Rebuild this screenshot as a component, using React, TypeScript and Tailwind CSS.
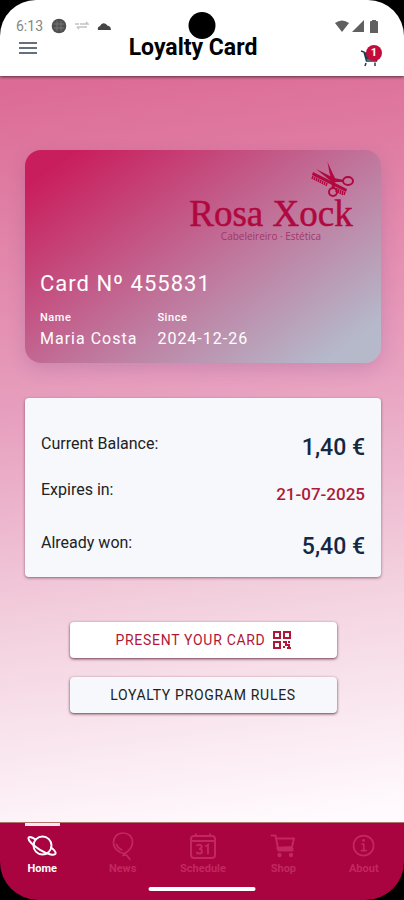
import type { ReactNode } from 'react';
import { IoInformationCircleOutline } from 'react-icons/io5';

const ROBOTO = "font-['Roboto','Liberation_Sans',sans-serif]";

type Tab = { label: string; icon: ReactNode; active?: boolean };

const tabs: Tab[] = [
  { label: 'Home', icon: <PlanetIcon />, active: true },
  { label: 'News', icon: <BalloonIcon /> },
  { label: 'Schedule', icon: <CalendarIcon /> },
  { label: 'Shop', icon: <CartIcon /> },
  { label: 'About', icon: <IoInformationCircleOutline className="size-7" /> }
];

const balance = [
  { label: 'Current Balance:', value: '1,40 €', row: 'h-[46px]', style: 'text-[23px] text-[#142843]' },
  { label: 'Expires in:', value: '21-07-2025', row: 'h-[53px]', style: 'text-[17px] text-[#b01839]' },
  { label: 'Already won:', value: '5,40 €', row: 'h-11', style: 'text-[23px] text-[#142843]' }
];

function MenuIcon() {
  return (
    <svg viewBox="0 0 24 24" className="size-6" fill="none" stroke="#66707c" strokeWidth="2" aria-hidden="true">
      <path d="M3 7h18M3 12h18M3 17h18" />
    </svg>
  );
}

function PlanetIcon() {
  return (
    <svg
      viewBox="0 0 30 28"
      className="h-7 w-[30px]"
      fill="none"
      stroke="currentColor"
      strokeWidth="2"
      strokeLinecap="round"
      aria-hidden="true"
    >
      <circle cx="15.500" cy="13.500" r="9" />
      <path d="M8.500 7.500C5 5 2.300 4.500 1.600 5.800 0.500 8 6 13.500 13 17.800 20 22 27.300 24 28.400 21.800 29.200 20.200 27 17.700 24 15.500" />
    </svg>
  );
}

function BalloonIcon() {
  return (
    <svg
      viewBox="0 0 28 30"
      className="h-[30px] w-7"
      fill="none"
      stroke="currentColor"
      strokeWidth="1.700"
      strokeLinecap="round"
      strokeLinejoin="round"
      aria-hidden="true"
    >
      <path d="M14 2C8 2 4.500 6.500 4.500 11.500 4.500 17 9.500 22 15.500 22.500 20 20 23.500 16 23.500 11 23.500 5.500 19.500 2 14 2z" />
      <path d="M7.500 13.500q1.500 4 5.500 5.500M15.500 22.500l-1.500 2 3.500-.5 3.500 4.500" />
    </svg>
  );
}

function CalendarIcon() {
  return (
    <svg viewBox="0 0 28 28" className="size-7" fill="none" stroke="currentColor" strokeWidth="2" aria-hidden="true">
      <rect x="2" y="4" width="24" height="22" rx="3" />
      <path d="M2 9h24M7 1.500v3M21 1.500v3" />
      <path
        d="M7.500 14q1-1.500 3-1.300 2.300.3 2.200 2.200-.1 1.900-2.600 2 2.800.1 2.900 2.300 0 2.300-2.700 2.400-2 0-3-1.500M16 14.500l3-1.800v9.500"
        strokeWidth="2"
      />
    </svg>
  );
}

function CartIcon() {
  return (
    <svg
      viewBox="0 0 26 26"
      className="size-[26px]"
      fill="none"
      stroke="currentColor"
      strokeWidth="2"
      strokeLinecap="round"
      strokeLinejoin="round"
      aria-hidden="true"
    >
      <path d="M1.500 2.500h4l3 15h14M6 5.500h18l-2 8.500-14.500.800" />
      <path d="M8 15.500h14" strokeWidth="3" />
      <circle cx="9.500" cy="22" r="1.200" fill="currentColor" />
      <circle cx="21" cy="22" r="1.200" fill="currentColor" />
    </svg>
  );
}

function StatusBar() {
  return (
    <div className="flex h-9 items-end justify-between pr-[26px] pl-4 text-[#606060]">
      <div className="flex h-5 items-center gap-2">
        <span className="text-sm text-[#858585]">6:13</span>
        <svg viewBox="0 0 16 16" className="size-4" aria-hidden="true">
          <circle cx="8" cy="8" r="7.300" fill="#505050" />
          <path d="M3 6h10M3 10h10M6 3v10M10 3v10" stroke="#757575" strokeWidth="1" />
        </svg>
        <svg viewBox="0 0 14 10" className="h-2.5 w-3.5" fill="none" stroke="#c4c4c4" strokeWidth="1.500" aria-hidden="true">
          <path d="M0 3h4M5 3h8l-2-2M2 6h10M2 6l2 2" />
        </svg>
        <svg viewBox="0 0 14 8" className="h-2 w-3.5" fill="#454545" aria-hidden="true">
          <path d="M1 8q-1-3 2-4 2-4 6-2 1 2 3 2 2 1 2 4z" />
        </svg>
      </div>
      <div className="flex h-5 items-center gap-[3px]">
        <svg viewBox="0 0 14 12" className="h-3 w-3.5" fill="currentColor" aria-hidden="true">
          <path d="M0 3q7-5 14 0L7 12z" />
        </svg>
        <svg viewBox="0 0 12 12" className="size-3" fill="currentColor" aria-hidden="true">
          <path d="M12 0v12H0z" />
        </svg>
        <svg viewBox="0 0 8 13" className="ml-[3px] h-[13px] w-2" fill="currentColor" aria-hidden="true">
          <path d="M2 0h4v1h1q1 0 1 1v11H0V2q0-1 1-1h1z" />
        </svg>
      </div>
    </div>
  );
}

function Header() {
  return (
    <header className="relative z-10 h-[76px] bg-white shadow-[0_1px_3px_rgba(0,0,0,0.6)]">
      <div className="absolute top-3 left-1/2 size-[27px] -translate-x-1/2 rounded-full bg-black" />
      <StatusBar />
      <div className="grid grid-cols-[1fr_auto_1fr] grid-rows-[24px] items-start pr-[22px] pl-1">
        <button type="button" aria-label="Menu" className="ml-3 w-6">
          <MenuIcon />
        </button>
        <h1 className="text-[23px] leading-6 font-bold text-black">Loyalty Card</h1>
        <button type="button" aria-label="Cart, 1 item" className="relative mt-[9px] h-6 w-[22px] justify-self-end">
          <svg viewBox="0 0 22 24" className="h-6 w-[22px]" fill="none" stroke="#1f3b54" strokeWidth="1.500" aria-hidden="true">
            <path d="M1 6l3 1 2.500 9h10l1-7M6 18l-1 3M15 17.500v3.500" />
            <path d="M5 8h12l-1 6H7z" fill="#1f4a63" />
          </svg>
          <span className="absolute top-0 right-0 flex size-4 items-center justify-center rounded-full bg-[#c40c3c] text-[11px] font-bold text-white">
            1
          </span>
        </button>
      </div>
    </header>
  );
}

function Logo() {
  return (
    <svg viewBox="0 0 168 84" className="h-[84px] w-[168px]" role="img" aria-label="Rosa Xock Cabeleireiro Estética">
      <path d="M125 14l34 17-1 3-34-17z" fill="#b0083f" />
      <path
        d="M125 18l-1 3M127 19l-1 3M129 20l-1 3M131 21l-1 3M133 22l-1 3M135 23l-1 3M137 24l-1 3M139 25l-1 3M149 30l-1 4M151 31l-1 4M153 32l-1 4M155 33l-1 4M157 34l-1 3"
        stroke="#b0083f"
        strokeWidth="1.500"
      />
      <path d="M139.500 4l5 11 4 8-4 1-3-9zM128 11l18 9 10 2-1 2-11 0z" fill="#b0083f" />
      <g fill="none" stroke="#b0083f" strokeWidth="2">
        <path d="M146 22l-1 8" strokeWidth="3" />
        <ellipse cx="160" cy="23" rx="5" ry="4" />
        <circle cx="145" cy="34" r="4" />
      </g>
      <text
        x="83"
        y="68"
        textAnchor="middle"
        className="fill-[#b0083f] font-['Liberation_Serif',serif] text-[37px]"
        stroke="#b0083f"
        strokeWidth="0.500"
      >
        Rosa Xock
      </text>
      <text x="83" y="82" textAnchor="middle" className="fill-[#a2366c] font-['Open_Sans',sans-serif] text-[10px]">
        Cabeleireiro · Estética
      </text>
    </svg>
  );
}

function LoyaltyCard() {
  return (
    <section className="rounded-2xl bg-[linear-gradient(145deg,#c91e5d_8%,#c0769c_54%,#b5b9ca_91%)] px-[15px] pt-2 pb-3 text-white shadow-[0_6px_18px_rgba(90,50,130,0.18)]">
      <div className="flex justify-end pr-2.5">
        <Logo />
      </div>
      <p className="mt-7 text-[22px] leading-7 tracking-[1px]">Card Nº 455831</p>
      <dl className="mt-3 flex gap-5">
        <div>
          <dt className="text-[11px] leading-4 font-medium tracking-wider">Name</dt>
          <dd className="mt-px text-base leading-6 tracking-[1px]">Maria Costa</dd>
        </div>
        <div>
          <dt className="text-[11px] leading-4 font-medium tracking-wider">Since</dt>
          <dd className="mt-px text-base leading-6 tracking-[1px]">2024-12-26</dd>
        </div>
      </dl>
    </section>
  );
}

function BalanceCard() {
  return (
    <dl className="mt-[35px] rounded bg-[#f6f8fc] px-4 pt-[34px] pb-0.5 shadow-[0_1px_3px_rgba(80,30,55,0.6)]">
      {balance.map((item) => (
        <div key={item.label} className={`flex items-start justify-between ${item.row}`}>
          <dt className="text-base leading-6 text-[#222]">{item.label}</dt>
          <dd className={`pt-0.5 leading-7 font-medium ${item.style}`}>{item.value}</dd>
        </div>
      ))}
    </dl>
  );
}

function QrIcon() {
  return (
    <svg viewBox="0 0 18 18" className="size-[18px]" fill="none" stroke="currentColor" strokeWidth="2" aria-hidden="true">
      <path d="M1 1h6v6H1zM11 1h6v6h-6zM1 11h6v6H1z" />
      <path d="M10 11h3v3h3v3M16 10v2M10 16h2M14 17h4" />
    </svg>
  );
}

function Actions() {
  const base =
    'flex h-9 w-3/4 items-center justify-center gap-[7px] rounded text-sm tracking-wider shadow-[0_1px_3px_rgba(80,20,45,0.85)]';
  return (
    <div className="mt-[45px] flex flex-col items-center gap-[19px]">
      <button type="button" className={`${base} bg-white text-[#b01839]`}>
        PRESENT YOUR CARD
        <QrIcon />
      </button>
      <button type="button" className={`${base} bg-[#f6f8fc] text-[#222]`}>
        LOYALTY PROGRAM RULES
      </button>
    </div>
  );
}

function TabBar() {
  return (
    <nav className="relative h-[78px] border-t border-[#b0746f] bg-[#a90340]">
      <ul className="grid grid-cols-5 pl-0.5">
        {tabs.map((tab) => (
          <li key={tab.label}>
            <a
              href={`#${tab.label.toLowerCase()}`}
              aria-current={tab.active ? 'page' : undefined}
              className={`flex flex-col items-center ${tab.active ? 'text-white' : 'text-[#c2285f]'}`}
            >
              <span className={`h-[3px] w-[35px] ${tab.active ? 'bg-[#fae8ef]' : ''}`} />
              <span className="mt-1 flex h-8 items-center">{tab.icon}</span>
              <span className="mt-px text-[11px] leading-3 font-bold">{tab.label}</span>
            </a>
          </li>
        ))}
      </ul>
      <div className="absolute bottom-[9px] left-1/2 h-1 w-[107px] -translate-x-1/2 rounded-full bg-white" />
    </nav>
  );
}

export default function App() {
  return (
    <div className={`min-h-screen bg-black ${ROBOTO}`}>
      <div className="flex min-h-screen flex-col overflow-hidden rounded-t-[36px] rounded-b-[38px]">
        <Header />
        <main className="flex-1 bg-[linear-gradient(172deg,#dc6c95_2%,#e7a0bf_43%,#f4d5e1_72%,#fffafd_98%)] pt-[74px] pr-[23px] pl-[25px]">
          <LoyaltyCard />
          <BalanceCard />
          <Actions />
        </main>
        <TabBar />
      </div>
    </div>
  );
}
